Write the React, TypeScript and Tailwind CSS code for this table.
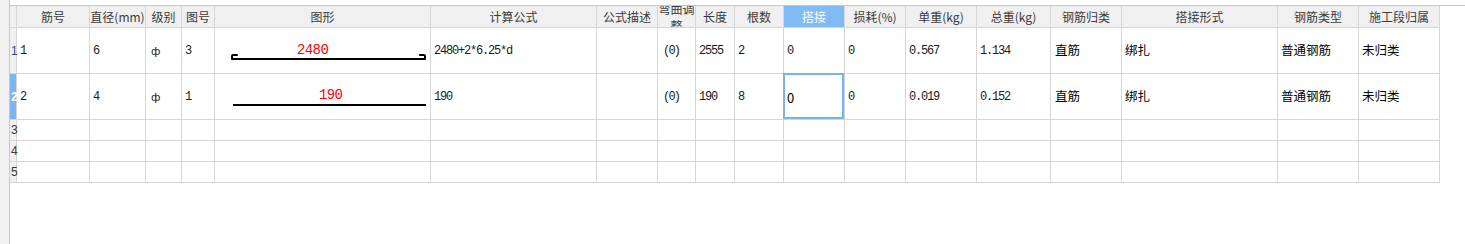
import React from "react";

const CJK = "font-['Noto_Sans_CJK_SC','Noto_Sans',sans-serif]";
const MONO = "font-['Liberation_Mono','Noto_Sans_CJK_SC',monospace]";

const headers = [
  "筋号", "直径(mm)", "级别", "图号", "图形", "计算公式", "公式描述", "弯曲调整", "长度", "根数",
  "搭接", "损耗(%)", "单重(kg)", "总重(kg)", "钢筋归类", "搭接形式", "钢筋类型", "施工段归属",
];

type Bar = { label: string; hooks: boolean; labelLeft: number; labelTop: number };

type Row = {
  no: string; dia: string; grade: string; fig: string; bar: Bar; formula: string;
  bend: string; len: string; count: string; lap: string; loss: string; unit: string; total: string;
  kind: string; lapType: string; steel: string; stage: string;
};

const rows: Row[] = [
  {
    no: "1", dia: "6", grade: "ф", fig: "3",
    bar: { label: "2480", hooks: true, labelLeft: 82, labelTop: 15 },
    formula: "2480+2*6.25*d", bend: "(0)", len: "2555", count: "2", lap: "0", loss: "0",
    unit: "0.567", total: "1.134", kind: "直筋", lapType: "绑扎", steel: "普通钢筋", stage: "未归类",
  },
  {
    no: "2", dia: "4", grade: "ф", fig: "1",
    bar: { label: "190", hooks: false, labelLeft: 104, labelTop: 14 },
    formula: "190", bend: "(0)", len: "190", count: "8", lap: "0", loss: "0",
    unit: "0.019", total: "0.152", kind: "直筋", lapType: "绑扎", steel: "普通钢筋", stage: "未归类",
  },
];

const line = "border-r border-b border-[#d6d6d6]";

function Txt({ children, cjk, pad = "pl-[3px]" }: { children: React.ReactNode; cjk?: boolean; pad?: string }) {
  return (
    <div className={`${line} flex items-center overflow-hidden whitespace-nowrap ${pad} ${cjk ? `${CJK} text-[12.5px] text-black` : `${MONO} text-[12px] tracking-[-1.2px] text-[#1a1a1a]`}`}>
      {children}
    </div>
  );
}

function BarShape({ bar }: { bar: Bar }) {
  return (
    <div className={`${line} relative`}>
      <svg className="absolute left-0 top-0" width="215" height="45" viewBox="0 0 215 45" fill="none">
        {bar.hooks ? (
          <path d="M22 27H18Q17 27 17 28V31H210V28Q210 27 209 27H205" stroke="#000" strokeWidth="2" strokeLinejoin="round" strokeLinecap="round" />
        ) : (
          <path d="M18 31H211" stroke="#000" strokeWidth="2" />
        )}
      </svg>
      <span
        className={`block ${MONO} text-[14px] leading-[14px] tracking-[-0.6px] text-[#ff0000]`}
        style={{ marginLeft: bar.labelLeft, marginTop: bar.labelTop }}
      >
        {bar.label}
      </span>
    </div>
  );
}

export default function App() {
  return (
    <div className="flex h-[244px] w-[1465px] bg-white">
      {/* left gutter */}
      <div className="h-full w-[10px] border-r border-[#c8c8c8] bg-[#f0f0f0]" />

      <div className="flex flex-1 flex-col">
        <div className="h-[5px]" />
        <div className="border-t border-[#c8c8c8]">
          <div className="grid w-[1430px] grid-cols-[7px_73px_56px_36px_33px_216px_166px_61px_38px_39px_49px_61px_61px_71px_74px_71px_156px_81px_81px] grid-rows-[22px_46px_46px_21px_21px_21px]">
            {/* header row */}
            <div className={`${line} bg-[#f0f0f0]`} />
            {headers.map((h) => (
              <div
                key={h}
                className={`${line} flex items-center justify-center overflow-hidden text-center ${CJK} text-[12px] ${
                  h === "弯曲调整" ? "leading-[17px]" : "leading-[14px]"
                } ${h === "搭接" ? "bg-[#82bbf4] text-white" : "bg-[#f0f0f0] text-[#3a3a3a]"}`}
              >
                {h}
              </div>
            ))}

            {/* data rows */}
            {rows.map((r, i) => (
              <React.Fragment key={r.no}>
                <div
                  className={`${line} flex items-center pl-px font-['Liberation_Sans',sans-serif] text-[12px] ${
                    i === 1 ? "bg-[#7db6ef] font-bold text-white" : "bg-[#f0f0f0] text-[#2b4c7e]"
                  }`}
                >
                  {r.no}
                </div>
                <Txt>{r.no}</Txt>
                <Txt>{r.dia}</Txt>
                <Txt pad="pl-[5px]">
                  <span className="mt-[3px] font-['DejaVu_Sans',sans-serif] text-[11px] tracking-normal">{r.grade}</span>
                </Txt>
                <Txt>{r.fig}</Txt>
                <BarShape bar={r.bar} />
                <Txt>{r.formula}</Txt>
                <Txt>{""}</Txt>
                <Txt pad="pl-[5px]">
                  <span className="tracking-[-1.8px]">{r.bend}</span>
                </Txt>
                <Txt>{r.len}</Txt>
                <Txt>{r.count}</Txt>
                {i === 1 ? (
                  <div className={`${line} relative flex items-center pl-[3px] ${CJK} text-[13px] text-black`}>
                    <span className="mt-[2px]">{r.lap}</span>
                    <span className="absolute -left-px -top-px bottom-0 right-0 border-2 border-[#7ab2ea]" />
                  </div>
                ) : (
                  <Txt>{r.lap}</Txt>
                )}
                <Txt>{r.loss}</Txt>
                <Txt>{r.unit}</Txt>
                <Txt>{r.total}</Txt>
                <Txt cjk pad="pl-[4px]">{r.kind}</Txt>
                <Txt cjk>{r.lapType}</Txt>
                <Txt cjk>{r.steel}</Txt>
                <Txt cjk>{r.stage}</Txt>
              </React.Fragment>
            ))}

            {/* empty rows */}
            {["3", "4", "5"].map((n) => (
              <React.Fragment key={n}>
                <div className={`${line} flex items-center pl-px bg-[#f0f0f0] font-['Liberation_Sans',sans-serif] text-[12px] text-[#3a3a3a]`}>
                  {n}
                </div>
                {headers.map((h) => (
                  <div key={h} className={line} />
                ))}
              </React.Fragment>
            ))}
          </div>
        </div>
      </div>
    </div>
  );
}
